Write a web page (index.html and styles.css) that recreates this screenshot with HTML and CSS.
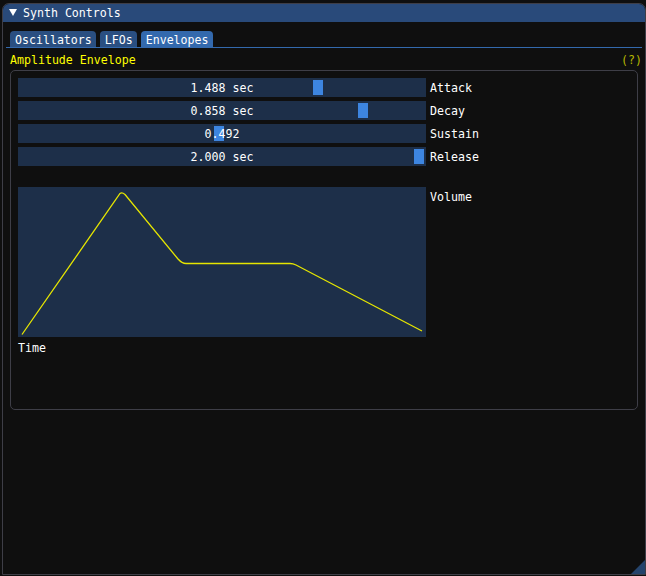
FILE: index.html
```html
<!DOCTYPE html>
<html>
<head>
<meta charset="utf-8">
<link rel="stylesheet" href="styles.css">
</head>
<body>
<div class="window">
  <div class="titlebar">
    <svg class="arrow" width="8" height="7" viewBox="0 0 8 7"><polygon points="0,0 8,0 4,7" fill="#ffffff"/></svg>
    <span>Synth Controls</span>
  </div>
  <div class="content">
    <div class="tabbar">
      <div class="tab">Oscillators</div>
      <div class="tab">LFOs</div>
      <div class="tab active">Envelopes</div>
    </div>
    <div class="header-row">
      <span class="yellow">Amplitude Envelope</span>
      <span class="help">(?)</span>
    </div>
    <div class="child">
      <div class="sliders">
        <div class="slider-row">
          <div class="slider"><span class="value">1.488 sec</span><div class="grab" style="left:295px"></div></div>
          <span class="label">Attack</span>
        </div>
        <div class="slider-row">
          <div class="slider"><span class="value">0.858 sec</span><div class="grab" style="left:340px"></div></div>
          <span class="label">Decay</span>
        </div>
        <div class="slider-row">
          <div class="slider"><span class="value">0.492</span><div class="grab" style="left:196px"></div></div>
          <span class="label">Sustain</span>
        </div>
        <div class="slider-row">
          <div class="slider"><span class="value">2.000 sec</span><div class="grab" style="left:396px"></div></div>
          <span class="label">Release</span>
        </div>
      </div>
      <div class="plot-row">
        <div class="plot">
          <svg width="408" height="150" viewBox="0 0 408 150">
            <path d="M4 147.5 L102 6.5 Q104 5 107 7.5 L160 72 Q164 76.5 168 76.5 L272 76.5 Q275 76.5 278 78 L404 144" fill="none" stroke="#e6e600" stroke-width="1.3"/>
          </svg>
        </div>
        <span class="label">Volume</span>
      </div>
      <div class="time">Time</div>
    </div>
  </div>
  <div class="grip"></div>
</div>
</body>
</html>
```

FILE: styles.css
```css
html, body {
  margin: 0;
  padding: 0;
  background: #0f0f0f;
}

body {
  width: 646px;
  height: 576px;
  overflow: hidden;
  font-family: "DejaVu Sans Mono", "Liberation Mono", monospace;
  font-size: 11.6px;
  line-height: 13px;
  color: #ffffff;
}

.window {
  position: relative;
  margin: 3px 0 0 2px;
  width: 644px;
  height: 572px;
  box-sizing: border-box;
  border: 1px solid #3e3e47;
  border-radius: 7px 7px 0 0;
  background: #0f0f0f;
  display: flex;
  flex-direction: column;
}

.titlebar {
  height: 18px;
  box-sizing: border-box;
  padding: 3px 0 0 6px;
  background: #294a7a;
  border-radius: 6px 6px 0 0;
  display: flex;
  align-items: flex-start;
  gap: 6px;
}

.arrow {
  margin-top: 2px;
  flex: none;
}

.content {
  padding: 9px 7px 0 7px;
  display: flex;
  flex-direction: column;
}

.tabbar {
  display: flex;
  gap: 4px;
  margin: 0 -4px;
  padding: 0 4px;
  border-bottom: 1px solid #3369ad;
}

.tab {
  height: 16px;
  box-sizing: border-box;
  padding: 3px 4px 0 5px;
  background: #2a4f81;
  border-radius: 4px 4px 0 0;
}

.tab.active {
  background: #3369ad;
}

.header-row {
  display: flex;
  justify-content: space-between;
  margin-top: 6px;
  height: 13px;
}

.yellow {
  color: #ffff00;
}

.help {
  color: #b8b800;
  margin-right: -4px;
}

.child {
  margin-top: 3px;
  height: 340px;
  box-sizing: border-box;
  border: 1px solid #3e3e47;
  border-radius: 5px;
  padding: 7px;
  display: flex;
  flex-direction: column;
}

.sliders {
  display: flex;
  flex-direction: column;
  gap: 4px;
}

.slider-row {
  display: flex;
  gap: 4px;
}

.slider {
  position: relative;
  width: 408px;
  height: 19px;
  box-sizing: border-box;
  padding-top: 4px;
  background: #1d2f49;
  text-align: center;
}

.value {
  position: relative;
  z-index: 1;
}

.grab {
  position: absolute;
  top: 2px;
  width: 10px;
  height: 15px;
  background: #3d85e0;
}

.label {
  padding-top: 4px;
}

.plot-row {
  display: flex;
  gap: 4px;
  margin-top: 21px;
}

.plot {
  width: 408px;
  height: 150px;
  background: #1d2f49;
}

.plot svg {
  display: block;
}

.time {
  margin-top: 5px;
}

.grip {
  position: absolute;
  right: 0;
  bottom: 0;
  width: 14px;
  height: 14px;
  background: #25446c;
  clip-path: polygon(100% 0, 100% 100%, 0 100%);
}
```
